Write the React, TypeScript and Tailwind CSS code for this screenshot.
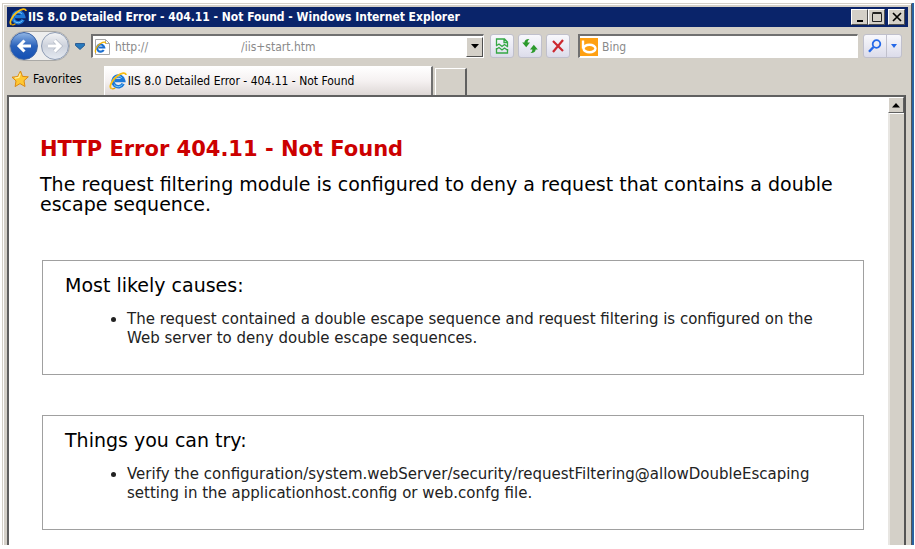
import type { ReactNode } from "react";

function IeLogo({ size }: { size: number }) {
  return (
    <svg width={size} height={size} viewBox="0 0 18 18" aria-hidden="true" className="shrink-0">
      <path d="M14.200 11.800a5.400 5.400 0 1 1 .5-3.300H6" fill="none" stroke="#1c78d8" strokeWidth="3.400" />
      <path d="M13.400 12.400a5 5 0 0 1-8.400.2M4.600 7a5 5 0 0 1 8.200-1.300" fill="none" stroke="#7accfa" strokeWidth="1" />
      <path d="M2.400 16.500C-.4 15 2.800 8.200 8 4.200 12.400.8 16.800 0 17 3" fill="none" stroke="#f7bd14" strokeWidth="1.800" />
      <path d="M2.400 16.500c1 .6 2.600.2 4-.8" fill="none" stroke="#e6a400" strokeWidth="1.300" />
    </svg>
  );
}

function CaptionButton({ label, children }: { label: string; children: ReactNode }) {
  return (
    <button
      aria-label={label}
      className="flex h-4 w-[17px] items-center justify-center border border-t-white border-l-white border-r-[#505050] border-b-[#505050] bg-[#d4d0c8]"
    >
      {children}
    </button>
  );
}

function ToolButton({ label, children }: { label: string; children: ReactNode }) {
  return (
    <button
      aria-label={label}
      className="flex h-6 w-6 items-center justify-center rounded-[3px] border border-[#c0c0cc] bg-linear-to-b from-[#f8f8fc] via-[#ebebf5] to-[#dcdcea]"
    >
      {children}
    </button>
  );
}

function TitleBar() {
  return (
    <header className="flex h-5 items-center bg-[#0a246a] pr-[3px] pl-[2px]">
      <IeLogo size={18} />
      <span className="ml-px flex-1 font-bold whitespace-nowrap text-white">
        IIS 8.0 Detailed Error - 404.11 - Not Found - Windows Internet Explorer
      </span>
      <CaptionButton label="Minimize">
        <svg width="12" height="12" viewBox="0 0 12 12"><path d="M3 10h6" stroke="#000" strokeWidth="2" /></svg>
      </CaptionButton>
      <CaptionButton label="Maximize">
        <svg width="12" height="12" viewBox="0 0 12 12">
          <path d="M1.500 2.500h9v8h-9zM1.500 1.500h9" fill="none" stroke="#222" />
        </svg>
      </CaptionButton>
      <span className="w-[3px]" />
      <CaptionButton label="Close">
        <svg width="12" height="12" viewBox="0 0 12 12"><path d="M2 2l8 8M10 2l-8 8" stroke="#000" strokeWidth="1.700" /></svg>
      </CaptionButton>
    </header>
  );
}

function NavButtons() {
  return (
    <div className="flex h-7 items-center">
      <div className="flex items-center rounded-full border border-[#aaa9a6] bg-[#eeeeee]">
        <button aria-label="Back" className="flex size-7 items-center justify-center rounded-full border border-[#3a62a5] bg-linear-to-b from-[#8fb4e4] via-[#2a62bb] to-[#1450b4]">
          <svg width="18" height="18" viewBox="0 0 18 18"><path d="M16 9H4M9.500 3.500L4 9l5.500 5.500" fill="none" stroke="#fff" strokeWidth="3" /></svg>
        </button>
        <button aria-label="Forward" className="ml-[3px] flex size-7 items-center justify-center rounded-full border border-[#8d9bb3] bg-linear-to-b from-[#f2f3f5] via-[#cdd2dc] to-[#e4e9f1]">
          <svg width="18" height="18" viewBox="0 0 18 18" fill="none">
            <path d="M2 9h12M8.500 3.500L14 9l-5.500 5.500" stroke="#b4bac6" strokeWidth="4.400" />
            <path d="M2 9h12M8.500 3.500L14 9l-5.500 5.500" stroke="#fff" strokeWidth="3" />
          </svg>
        </button>
      </div>
      <button aria-label="Recent pages" className="ml-[3px] flex w-[13px] justify-center">
        <svg width="10" height="7" viewBox="0 0 10 7"><path d="M.5.5h9v2L5 6.500.5 2.500z" fill="#2779bd" stroke="#1a4d86" strokeWidth=".8" /></svg>
      </button>
    </div>
  );
}

function Toolbar() {
  return (
    <div className="flex items-center pt-[5px] pr-[6px] pl-[2px]">
      <NavButtons />
      <div className="ml-[5px] flex h-6 w-[393px] items-center border-t-2 border-r border-b border-l-2 border-t-[#707070] border-r-white border-b-white border-l-[#707070] bg-white">
        <svg width="17" height="18" viewBox="0 0 17 18" className="ml-px shrink-0" aria-hidden="true">
          <path d="M1.500 1.500h10l4 4v11h-14z" fill="#fff" stroke="#a8a8a8" />
          <path d="M11.500 1.500v4h4" fill="none" stroke="#a8a8a8" />
          <path d="M9.700 12a3.600 3.600 0 1 1 .5-2.500H4.500" fill="none" stroke="#1c6fd0" strokeWidth="2.200" />
          <path d="M2 14.500C0 13 3 7.500 6.500 5.500S12 4 11.500 5.500" fill="none" stroke="#f5b400" strokeWidth="1.300" />
        </svg>
        <label className="flex min-w-0 flex-1 items-center">
          <span className="ml-1 w-[126px] text-[#8a8a8a]">http://</span>
          <input aria-label="Address" defaultValue="/iis+start.htm" className="min-w-0 flex-1 bg-transparent text-[#8a8a8a] outline-none" />
        </label>
        <button aria-label="Show addresses" className="flex h-5 w-[17px] items-center justify-center border border-t-white border-l-white border-r-[#505050] border-b-[#505050] bg-[#d4d0c8]">
          <svg width="8" height="5" viewBox="0 0 8 5"><path d="M0 0h8L4 4.500z" fill="#000" /></svg>
        </button>
      </div>
      <div className="ml-[6px] flex gap-1">
        <ToolButton label="Compatibility view">
          <svg width="14" height="16" viewBox="0 0 14 16" fill="none" stroke="#35a845" strokeWidth="1.300">
            <path d="M1.500 7V1h8l3 3v4M9 1v3.500h3.500M1.500 10v5h11v-4" />
            <path d="M1 8l3-2 3 2.500L9.500 6.500 13 9M1 11.500L4 9.500l3 2.500 2.500-2L13 12.500" />
          </svg>
        </ToolButton>
        <ToolButton label="Refresh">
          <svg width="18" height="16" viewBox="0 0 18 16" className="shrink-0" fill="#2c9a2c">
            <path d="M8.500 1C5.200.8 3.400 2.400 3.400 4.600H1.200l4 4.600 3.800-4.600H6.600c0-1.400.6-2.600 1.900-3.600z" />
            <path d="M9.500 15c3.300.2 5.100-1.400 5.100-3.600h2.200l-4-4.600L9 11.400h2.400c0 1.400-.6 2.600-1.900 3.600z" />
          </svg>
        </ToolButton>
        <ToolButton label="Stop">
          <svg width="14" height="14" viewBox="0 0 14 14"><path d="M2 2l10 10M12 1L2 13" stroke="#cc2830" strokeWidth="2.200" /></svg>
        </ToolButton>
      </div>
      <div className="ml-2 flex h-6 flex-1 items-center border-t-2 border-r border-b border-l-2 border-t-[#707070] border-r-white border-b-white border-l-[#707070] bg-white">
        <svg width="18" height="18" viewBox="0 0 18 18" className="shrink-0" aria-hidden="true">
          <path d="M0 0h18v18H0z" fill="#ffa011" />
          <path d="M3 2.500v8" stroke="#fff" strokeWidth="2.400" />
          <ellipse cx="9.500" cy="10.500" rx="6" ry="3.700" fill="none" stroke="#fff" strokeWidth="2.400" />
        </svg>
        <input aria-label="Search" defaultValue="Bing" className="ml-1 min-w-0 flex-1 bg-transparent text-[#8a8a8a] outline-none" />
      </div>
      <div className="ml-[5px] flex h-6 overflow-hidden rounded-[3px] border border-[#c0c0cc] bg-linear-to-b from-[#f8f8fc] to-[#dcdcea]">
        <button aria-label="Search the web" className="flex w-[22px] items-center justify-center">
          <svg width="14" height="14" viewBox="0 0 14 14" fill="none" stroke="#2468e8">
            <circle cx="8.500" cy="5" r="3.800" strokeWidth="1.800" />
            <path d="M5.500 8L1 12.800" strokeWidth="2.400" />
          </svg>
        </button>
        <button aria-label="Search options" className="flex w-[15px] items-center justify-center border-l border-[#c0c0cc]">
          <svg width="6" height="4" viewBox="0 0 6 4"><path d="M0 0h6L3 4z" fill="#2468e8" /></svg>
        </button>
      </div>
    </div>
  );
}

function TabRow() {
  return (
    <nav className="flex h-[35px] items-end">
      <button className="mb-[7px] ml-1 flex items-center">
        <svg width="18" height="18" viewBox="0 0 18 18" aria-hidden="true">
          <path d="M9.500 1l2 5.400 5.800.4-4.300 3.900 1 5.800L9 13.600l-4.900 3 .9-5.700L1 7.200l5.600-.6z" fill="#ffc832" stroke="#dc8a10" strokeLinejoin="round" />
          <path d="M9.300 3.500l-1.500 4-4 .6" fill="none" stroke="#fff0a0" strokeWidth="1.300" />
        </svg>
        <span className="ml-1">Favorites</span>
      </button>
      <button className="ml-[22px] flex h-[29px] w-[329px] items-center border-t border-r-2 border-l border-t-white border-r-[#707070] border-l-white bg-linear-to-b from-white via-[#f5f1f1] to-[#ded8d6] pl-1 whitespace-nowrap">
        <IeLogo size={18} />
        <span className="ml-px">IIS 8.0 Detailed Error - 404.11 - Not Found</span>
      </button>
      <button aria-label="New tab" className="ml-[2px] h-[27px] w-8 border-t border-r-2 border-l border-t-white border-r-[#606060] border-l-white" />
    </nav>
  );
}

function Panel({ title, children }: { title: string; children: ReactNode }) {
  return (
    <section className="ml-[2px] border border-[#a0a0a0] pt-3 pr-6 pb-[26px] pl-[22px]">
      <h3 className="text-[19px] leading-6">{title}</h3>
      <ul className="mt-[13px] list-disc pl-[62px] text-[15px] leading-[19px] text-[#222]">
        <li>{children}</li>
      </ul>
    </section>
  );
}

function ScrollBar() {
  return (
    <div className="flex w-4 shrink-0 flex-col bg-[#d4d0c8]">
      <button aria-label="Scroll up" className="flex h-4 items-center justify-center border border-t-white border-l-white border-r-[#606060] border-b-[#606060]">
        <svg width="8" height="5" viewBox="0 0 8 5"><path d="M0 4.500h8L4 0z" fill="#000" /></svg>
      </button>
      <div className="flex-1 border-t border-l-2 border-t-white border-l-[#e8e6e2]" />
    </div>
  );
}

export default function App() {
  return (
    <div className="h-screen overflow-hidden bg-white pt-[3px] pr-px pb-1 pl-[2px] font-['DejaVu_Sans_Condensed','DejaVu_Sans',sans-serif] text-[12px] leading-4 text-black">
      <div className="h-full border-r-2 border-[#2a62a0]">
        <div className="flex h-full flex-col border-t border-r border-l border-t-[#d4d0c8] border-r-[#555] border-l-[#d4d0c8] bg-[#d4d0c8]">
          <div className="flex min-h-0 flex-1 flex-col border-t border-l border-white pt-[2px] pr-[3px] pl-[3px]">
            <TitleBar />
            <Toolbar />
            <TabRow />
            <main className="mr-[2px] flex min-h-0 flex-1 border-t-2 border-r-2 border-l-2 border-t-[#606060] border-r-[#555] border-l-[#606060] bg-white font-['DejaVu_Sans',sans-serif]">
              <div className="min-w-0 flex-1 overflow-hidden pt-[38px] pr-6 pl-[31px]">
                <h1 className="text-[21px] leading-7 font-bold text-[#cc0000]">HTTP Error 404.11 - Not Found</h1>
                <h2 className="mt-[11px] text-[19px] leading-5">
                  The request filtering module is configured to deny a request that contains a double escape sequence.
                </h2>
                <div className="mt-[46px] flex flex-col gap-10">
                  <Panel title="Most likely causes:">
                    The request contained a double escape sequence and request filtering is configured on the Web server to deny double escape sequences.
                  </Panel>
                  <Panel title="Things you can try:">
                    Verify the configuration/system.webServer/security/requestFiltering@allowDoubleEscaping setting in the applicationhost.config or web.confg file.
                  </Panel>
                </div>
              </div>
              <ScrollBar />
            </main>
          </div>
        </div>
      </div>
    </div>
  );
}
